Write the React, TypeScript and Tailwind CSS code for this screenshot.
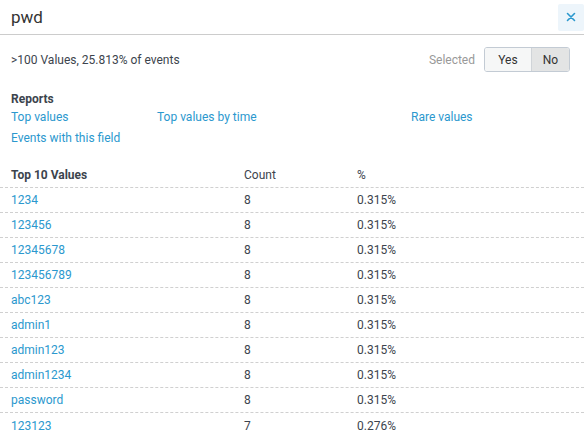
import React from "react";

const rows: [string, string, string][] = [
  ["1234", "8", "0.315%"],
  ["123456", "8", "0.315%"],
  ["12345678", "8", "0.315%"],
  ["123456789", "8", "0.315%"],
  ["abc123", "8", "0.315%"],
  ["admin1", "8", "0.315%"],
  ["admin123", "8", "0.315%"],
  ["admin1234", "8", "0.315%"],
  ["password", "8", "0.315%"],
  ["123123", "7", "0.276%"],
];

export default function App() {
  return (
    <div className="w-[587px] h-[443px] overflow-hidden bg-white font-['Roboto',sans-serif] text-[12px] leading-[16px] text-[#3c444d]">
      <div className="mr-[3px] flex h-[35px] items-center justify-between border-b border-[#cccccc] pl-[11px]">
        <div className="text-[17px] leading-[22px] text-[#333]">pwd</div>
        <button className="flex h-[27px] w-[26px] items-center justify-center rounded-[2px] bg-[#edf5fb]">
          <svg width="10" height="10" viewBox="0 0 10 10">
            <path d="M1.5 1.5 L8.5 8.5 M8.5 1.5 L1.5 8.5" stroke="#2b98ce" strokeWidth="1.6" strokeLinecap="round" />
          </svg>
        </button>
      </div>

      <div className="flex items-center justify-between pl-[11px] pr-[17px] pt-[12px]">
        <div>&gt;100 Values, 25.813% of events</div>
        <div className="flex items-center">
          <span className="mr-[9px] text-[#999]">Selected</span>
          <div className="flex h-[25px] overflow-hidden rounded-[3px] border border-[#c3cbd4]">
            <div className="flex w-[46px] items-center justify-center bg-[#f6f7f7] text-[#333]">Yes</div>
            <div className="flex w-[38px] items-center justify-center border-l border-[#d0d4d8] bg-[#e3e4e4] text-[#333]">No</div>
          </div>
        </div>
      </div>

      <div className="mt-[19px] pl-[11px]">
        <div className="font-bold">Reports</div>
        <div className="mt-[2px] grid grid-cols-[146px_254px_1fr] text-[#2b98ce]">
          <span>Top values</span>
          <span>Top values by time</span>
          <span>Rare values</span>
        </div>
        <div className="mt-[5px] text-[#2b98ce]">Events with this field</div>
      </div>

      <div className="mr-[3px] mt-[17px]">
        <div className="flex h-[25px] items-center border-b border-dashed border-[#d0d0d0]">
          <div className="w-[244px] pl-[11px] font-bold">Top 10 Values</div>
          <div className="w-[113px]">Count</div>
          <div className="flex-1">%</div>
        </div>
        {rows.map(([v, c, p], i) => (
          <div
            key={v}
            className={
              i < rows.length - 1
                ? "flex h-[25px] items-center border-b border-dashed border-[#d0d0d0]"
                : "flex h-[25px] items-center"
            }
          >
            <div className="w-[244px] pl-[11px] text-[#2b98ce]">{v}</div>
            <div className="w-[113px]">{c}</div>
            <div className="flex-1">{p}</div>
          </div>
        ))}
      </div>
    </div>
  );
}
